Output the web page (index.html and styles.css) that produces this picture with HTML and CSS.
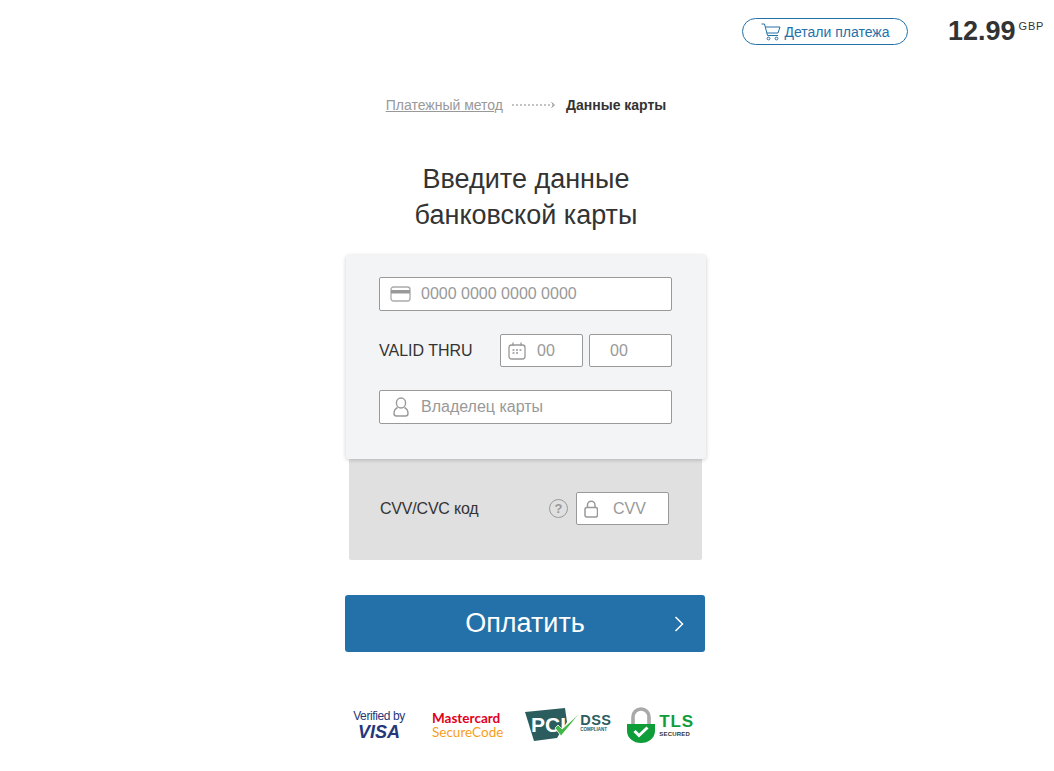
FILE: index.html
```html
<!DOCTYPE html>
<html lang="en">

<head>
    <meta charset="UTF-8">
    <meta name="viewport" content="width=device-width, initial-scale=1.0">
    <title>Оплата</title>
    <link rel="stylesheet" href="styles.css">
</head>

<body>
    <header class="top-bar">
        <a class="details-btn">
            <svg class="cart-icon" width="20" height="18" viewBox="0 0 20 18" fill="none" stroke="#2471a9" stroke-width="1">
                <path d="M0.5 1H3.5L6.5 12.5H17" />
                <path d="M4.3 4H19L17 10H5.8" />
                <circle cx="7.5" cy="15.5" r="1.4" />
                <circle cx="15.5" cy="15.5" r="1.4" />
            </svg>
            Детали платежа
        </a>
        <div class="price">12.99<span class="currency">GBP</span></div>
    </header>

    <main class="content">
        <nav class="steps">
            <a class="step-link">Платежный метод</a>
            <svg class="step-arrow" width="44" height="8" viewBox="0 0 44 8" fill="none" stroke="#888">
                <path d="M0 4H41" stroke-dasharray="2 2" />
                <path d="M39.5 1.5L42.5 4L39.5 6.5" />
            </svg>
            <b class="step-current">Данные карты</b>
        </nav>

        <h1 class="title">Введите данные<br>банковской карты</h1>

        <section class="card-front">
            <div class="field">
                <svg class="field-icon" width="22" height="16" viewBox="0 0 22 16">
                    <rect x="1" y="1" width="19" height="14" rx="2.5" fill="none" stroke="#aaa" stroke-width="1.3" />
                    <rect x="1" y="4" width="19" height="3.5" fill="#999" />
                </svg>
                <span class="placeholder">0000 0000 0000 0000</span>
            </div>

            <div class="expiry-row">
                <span class="label">VALID THRU</span>
                <div class="field field-month">
                    <svg class="field-icon" width="18" height="18" viewBox="0 0 18 18" fill="none" stroke="#999" stroke-width="1.3">
                        <rect x="1" y="3" width="16" height="14" rx="2.5" />
                        <path d="M5 0.5V4M13 0.5V4" />
                        <path d="M4.5 8H6.5M8 8H10M11.5 8H13.5M4.5 11H6.5M8 11H10" stroke-width="1.6" />
                    </svg>
                    <span class="placeholder">00</span>
                </div>
                <div class="field field-year">
                    <span class="placeholder">00</span>
                </div>
            </div>

            <div class="field">
                <svg class="field-icon" width="22" height="20" viewBox="0 0 22 20" fill="none" stroke="#999" stroke-width="1.4">
                    <ellipse cx="11" cy="6" rx="4.6" ry="5" />
                    <path d="M7.5 10.5C4.5 12 4 14 4 16.5C4 18 5 19 6.5 19H15.5C17 19 18 18 18 16.5C18 14 17.5 12 14.5 10.5" />
                </svg>
                <span class="placeholder">Владелец карты</span>
            </div>
        </section>

        <section class="card-back">
            <span class="label">CVV/CVC код</span>
            <span class="help">?</span>
            <div class="field field-cvv">
                <svg class="field-icon" width="14" height="18" viewBox="0 0 14 18" fill="none" stroke="#999" stroke-width="1.5">
                    <rect x="1" y="7.5" width="12.5" height="9.5" rx="2" />
                    <path d="M3.5 7.5V5A3.7 3.7 0 0 1 11 5V7.5" />
                </svg>
                <span class="placeholder">CVV</span>
            </div>
        </section>

        <button class="pay-btn">
            Оплатить
            <svg class="pay-arrow" width="10" height="16" viewBox="0 0 10 16" fill="none" stroke="#fff" stroke-width="1.5">
                <path d="M1.5 1L8.5 8L1.5 15" />
            </svg>
        </button>

        <footer class="badges">
            <div class="badge-visa">
                <span class="visa-top">Verified by</span>
                <span class="visa-name">VISA</span>
            </div>
            <div class="badge-mc">
                <span class="mc-top">Mastercard</span>
                <span class="mc-bottom">SecureCode</span>
            </div>
            <div class="badge-pci">
                <svg width="56" height="34" viewBox="0 0 56 34">
                    <path d="M0 4L40 0L42 14L32 30L9 33Z" fill="#2b5d5e" />
                    <text x="6" y="24" class="pci-text">PCI</text>
                    <path d="M30 20L36 28L55 5L37 21L33 17Z" fill="#43b649" stroke="#fff" stroke-width="0.8" />
                </svg>
                <div class="pci-right">
                    <span class="pci-dss">DSS</span>
                    <span class="pci-small">COMPLIANT</span>
                </div>
            </div>
            <div class="badge-tls">
                <svg width="28" height="36" viewBox="0 0 28 36">
                    <path d="M6 17V10A8 8 0 0 1 22 10V17" fill="none" stroke="#a9a9a9" stroke-width="3.6" />
                    <path d="M0 17H28V24A14 12 0 0 1 0 24Z" fill="#0f9d3a" />
                    <path d="M7.5 24L12 28.5L20.5 20.5" fill="none" stroke="#fff" stroke-width="3" />
                </svg>
                <div class="tls-right">
                    <span class="tls-name">TLS</span>
                    <span class="tls-small">SECURED</span>
                </div>
            </div>
        </footer>
    </main>
</body>

</html>
```

FILE: styles.css
```css
body {
    margin: 0;
    padding-right: 2px;
    font-family: "Liberation Sans", Arial, sans-serif;
    background-color: #fff;
    color: #333;
}

/* Top bar */
.top-bar {
    display: flex;
    justify-content: flex-end;
    align-items: center;
    padding: 14px 10px 0 0;
    height: 35px;
}

.details-btn {
    display: flex;
    align-items: center;
    justify-content: center;
    gap: 4px;
    box-sizing: border-box;
    width: 166px;
    height: 27px;
    border: 1px solid #2471a9;
    border-radius: 14px;
    color: #2471a9;
    font-size: 14px;
}

.cart-icon {
    margin-top: 1px;
}

.price {
    display: flex;
    align-items: flex-start;
    width: 94px;
    margin-left: 40px;
    font-size: 27px;
    font-weight: bold;
    line-height: 31px;
    color: #333;
}

.currency {
    margin: 3px 0 0 3px;
    font-size: 11px;
    font-weight: normal;
    line-height: 14px;
    letter-spacing: 0.8px;
}

/* Main column */
.content {
    width: 360px;
    margin: 0 auto;
}

.steps {
    display: flex;
    align-items: center;
    justify-content: center;
    height: 18px;
    margin-top: 47px;
    font-size: 14px;
}

.step-link {
    color: #999;
    text-decoration: underline;
}

.step-arrow {
    margin: 0 10px 0 9px;
}

.step-current {
    color: #333;
}

.title {
    margin: 47px 0 22px;
    font-size: 27px;
    font-weight: normal;
    line-height: 36px;
    text-align: center;
    color: #333;
}

/* Card form */
.card-front {
    display: flex;
    flex-direction: column;
    gap: 23px;
    box-sizing: border-box;
    height: 204px;
    padding: 22px 34px 0 33px;
    background: #f3f4f6;
    border-radius: 3px;
    box-shadow: 0 1px 4px rgba(0, 0, 0, 0.2);
    position: relative;
}

.field {
    display: flex;
    align-items: center;
    box-sizing: border-box;
    height: 34px;
    padding-left: 10px;
    background: #fff;
    border: 1px solid #999;
    border-radius: 2px;
}

.field-icon {
    flex-shrink: 0;
    margin-right: 9px;
}

.placeholder {
    color: #999;
    font-size: 16px;
}

.expiry-row {
    display: flex;
    align-items: center;
    height: 33px;
}

.expiry-row .field {
    height: 33px;
}

.expiry-row .label {
    width: 121px;
}

.field-month {
    width: 83px;
    margin-right: 6px;
    padding-left: 7px;
}

.field-month .field-icon {
    margin-right: 11px;
}

.field-year {
    width: 83px;
    padding-left: 20px;
}

.label {
    font-size: 16px;
    color: #333;
}

.card-back {
    display: flex;
    align-items: center;
    box-sizing: border-box;
    height: 101px;
    margin: 0 4px 0 3px;
    padding: 0 33px 2px 31px;
    background: #e0e0e0;
    border-radius: 0 0 2px 2px;
}

.help {
    display: flex;
    align-items: center;
    justify-content: center;
    box-sizing: border-box;
    width: 19px;
    height: 19px;
    margin: 0 8px 0 auto;
    border: 1.5px solid #999;
    border-radius: 50%;
    color: #999;
    font-size: 13px;
    font-weight: bold;
}

.card-back .label {
    font-size: 16px;
    letter-spacing: -0.2px;
}

.field-cvv {
    width: 93px;
    height: 33px;
    padding-left: 7px;
}

.field-cvv .field-icon {
    margin-right: 15px;
}

.pay-btn {
    position: relative;
    display: block;
    width: 360px;
    height: 57px;
    margin: 35px 0 0 -1px;
    padding: 0;
    background: #2471a9;
    border: none;
    border-radius: 3px;
    color: #fff;
    font-family: inherit;
    font-size: 27px;
}

.pay-arrow {
    position: absolute;
    top: 21px;
    right: 21px;
}

/* Security logos */
.badges {
    display: flex;
    align-items: center;
    height: 38px;
    margin: 54px 0 0 5px;
}

.badge-visa {
    display: flex;
    flex-direction: column;
    align-items: center;
    width: 56px;
    color: #26377a;
}

.visa-top {
    font-size: 12px;
    letter-spacing: -0.4px;
    line-height: 13px;
}

.visa-name {
    font-size: 18px;
    font-weight: bold;
    font-style: italic;
    line-height: 18px;
}

.badge-mc {
    display: flex;
    flex-direction: column;
    margin-left: 25px;
    font-family: Lato, sans-serif;
    font-size: 13.5px;
    line-height: 14px;
}

.mc-top {
    color: #e2001a;
    font-weight: bold;
}

.mc-bottom {
    color: #f79e1b;
}

.badge-pci {
    display: flex;
    align-items: center;
    margin-left: 22px;
    color: #2b5d5e;
}

.pci-text {
    fill: #fff;
    font-size: 21px;
    font-weight: bold;
}

.pci-right {
    display: flex;
    flex-direction: column;
    margin: -3px 0 0 -1px;
}

.pci-dss {
    font-size: 14.5px;
    font-weight: bold;
    line-height: 13px;
    letter-spacing: 0.4px;
}

.pci-small {
    font-size: 4.5px;
    font-weight: bold;
    line-height: 6px;
}

.badge-tls {
    display: flex;
    align-items: center;
    margin-left: 16px;
}

.tls-right {
    display: flex;
    flex-direction: column;
    margin-left: 4px;
}

.tls-name {
    color: #0f9d3a;
    font-size: 17px;
    font-weight: bold;
    line-height: 17px;
    letter-spacing: 0.8px;
}

.tls-small {
    color: #333;
    font-size: 6px;
    font-weight: bold;
    line-height: 8px;
    letter-spacing: 0.2px;
}
```
